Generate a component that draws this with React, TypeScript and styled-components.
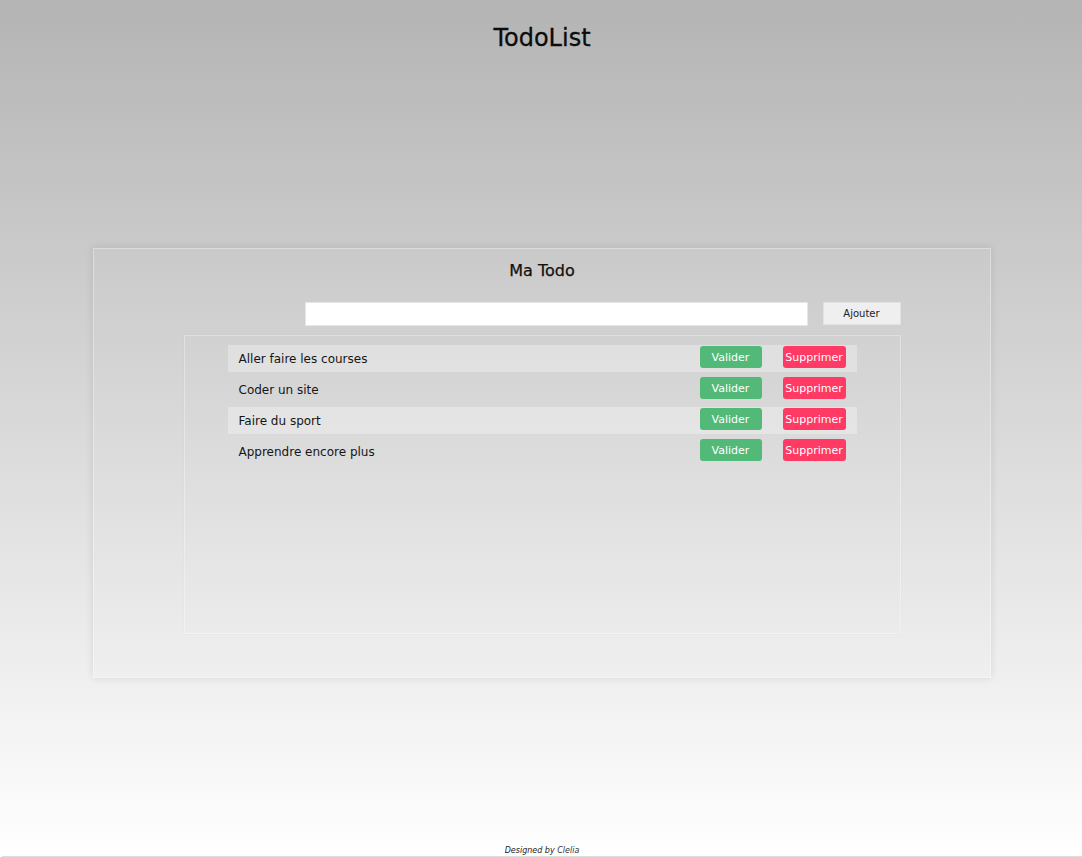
import React, { useState } from "react";
import styled, { createGlobalStyle } from "styled-components";

const GlobalStyle = createGlobalStyle`
  * { box-sizing: border-box; }
  html, body { margin: 0; padding: 0; }
  body {
    font-family: "DejaVu Sans", "Open Sans", sans-serif;
    color: #111;
  }
`;

type Todo = { id: number; label: string; done: boolean };

const App = () => {
  const [todos] = useState<Todo[]>([
    { id: 1, label: "Aller faire les courses", done: false },
    { id: 2, label: "Coder un site", done: false },
    { id: 3, label: "Faire du sport", done: false },
    { id: 4, label: "Apprendre encore plus", done: false },
  ]);

  return (
    <>
      <GlobalStyle />
      <Page>
        <Title>TodoList</Title>
        <Card>
          <CardTitle>Ma Todo</CardTitle>
          <Form onSubmit={(e) => e.preventDefault()}>
            <Input type="text" />
            <AddButton type="submit">Ajouter</AddButton>
          </Form>
          <ListBox>
            {todos.map((t, i) => (
              <Row key={t.id} striped={i % 2 === 0}>
                <Label>{t.label}</Label>
                <Actions>
                  <ActionButton kind="ok">Valider</ActionButton>
                  <ActionButton kind="del">Supprimer</ActionButton>
                </Actions>
              </Row>
            ))}
          </ListBox>
        </Card>
        <Footer>
          Designed by <span>Clelia</span>
        </Footer>
      </Page>
    </>
  );
};

export default App;

const Page = styled.div`
  min-height: 857px;
  display: flex;
  flex-direction: column;
  align-items: center;
  padding-left: 2px;
  background: linear-gradient(180deg, #b4b4b4 0%, #ffffff 100%);
`;
const Title = styled.h1`
  margin: 22px 0 0;
  font-size: 24px;
  font-weight: 500;
  line-height: 32px;
  color: #0c0c0c;
  -webkit-text-stroke: 0.3px #0c0c0c;
`;
const Card = styled.section`
  margin-top: 194px;
  width: 898px;
  height: 430px;
  border: 1px solid rgba(255, 255, 255, 0.35);
  box-shadow: 0 0 8px rgba(0, 0, 0, 0.1);
  display: flex;
  flex-direction: column;
  align-items: center;
  padding-top: 12px;
`;
const CardTitle = styled.h2`
  margin: 0;
  font-size: 16px;
  font-weight: 500;
  line-height: 20px;
  color: #111;
  -webkit-text-stroke: 0.25px #111;
`;
const Form = styled.form`
  width: 717px;
  display: flex;
  justify-content: flex-end;
  gap: 15px;
  margin-top: 21px;
`;
const Input = styled.input`
  width: 503px;
  height: 24px;
  border: 1px solid #e6e6e6;
  background: #fff;
  outline: none;
`;
const AddButton = styled.button`
  width: 78px;
  height: 23px;
  border: 1px solid #e2e2e2;
  background: #efefef;
  font-family: inherit;
  font-size: 10px;
  color: #222;
  padding: 0;
`;
const ListBox = styled.div`
  width: 717px;
  height: 299px;
  margin-top: 9px;
  border: 1px solid rgba(255, 255, 255, 0.35);
  box-shadow: 0 0 1px rgba(0, 0, 0, 0.08);
  padding: 9px 43px 0;
  display: flex;
  flex-direction: column;
  gap: 4px;
`;
const Row = styled.div<{ striped: boolean }>`
  height: 27px;
  display: flex;
  align-items: center;
  justify-content: space-between;
  padding: 0 11px;
  background: ${({ striped }) => (striped ? "rgba(255,255,255,0.3)" : "transparent")};
`;
const Label = styled.span`
  font-size: 12px;
  color: #161616;
`;
const Actions = styled.div`
  display: flex;
  gap: 21px;
  margin-top: -3px;
`;
const ActionButton = styled.button<{ kind: "ok" | "del" }>`
  height: 22px;
  width: ${({ kind }) => (kind === "ok" ? "62px" : "63px")};
  border: none;
  border-radius: 3px;
  padding: 0;
  font-family: inherit;
  font-size: 11px;
  color: #fff;
  background: ${({ kind }) => (kind === "ok" ? "#53b978" : "#ff3a64")};
`;
const Footer = styled.footer`
  margin-top: auto;
  width: 100%;
  text-align: center;
  font-size: 8px;
  font-style: italic;
  color: #222;
  border-bottom: 1px solid #ddd;
  line-height: 10px;
  span { color: #333; }
`;
